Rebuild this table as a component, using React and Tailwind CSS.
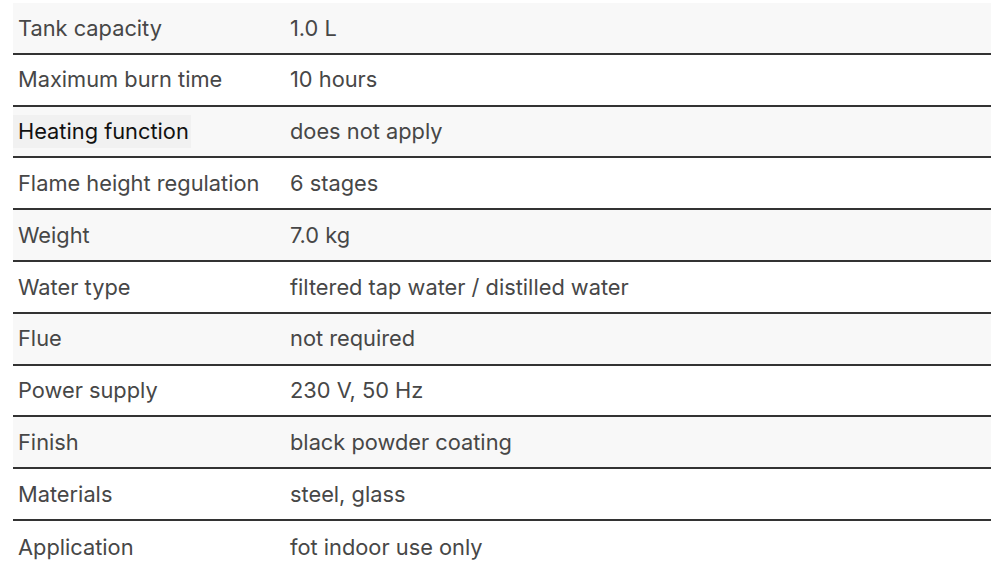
import React from "react";

const rows = [
  ["Tank capacity", "1.0 L"],
  ["Maximum burn time", "10 hours"],
  ["Heating function", "does not apply"],
  ["Flame height regulation", "6 stages"],
  ["Weight", "7.0 kg"],
  ["Water type", "filtered tap water / distilled water"],
  ["Flue", "not required"],
  ["Power supply", "230 V, 50 Hz"],
  ["Finish", "black powder coating"],
  ["Materials", "steel, glass"],
  ["Application", "fot indoor use only"],
];

export default function App() {
  return (
    <div className="w-[991px] h-[565px] bg-white overflow-hidden pt-[3px] pl-[13px]" style={{ fontFamily: "Inter, 'Noto Sans', sans-serif" }}>
      <div className="w-[990px] flex flex-col">
        {rows.map(([k, v], i) => {
          const gray = i % 2 === 0 && i < 10;
          const last = i === rows.length - 1;
          return (
            <div
              key={k}
              className={`flex items-center h-[51.8px] ${last ? "" : "border-b-2 border-[#333333]"} ${gray ? "bg-[#f8f8f8]" : "bg-white"}`}
            >
              <div className="w-[277px] pl-[5px] text-[21.8px] text-[#474747]">
                {i === 2 ? (
                  <span className="inline-block bg-[#f1f1f1] -ml-[5px] pl-[5px] pr-[2px] text-[#111111]">{k}</span>
                ) : (
                  k
                )}
              </div>
              <div className="text-[21.8px] text-[#474747]">{v}</div>
            </div>
          );
        })}
      </div>
    </div>
  );
}
